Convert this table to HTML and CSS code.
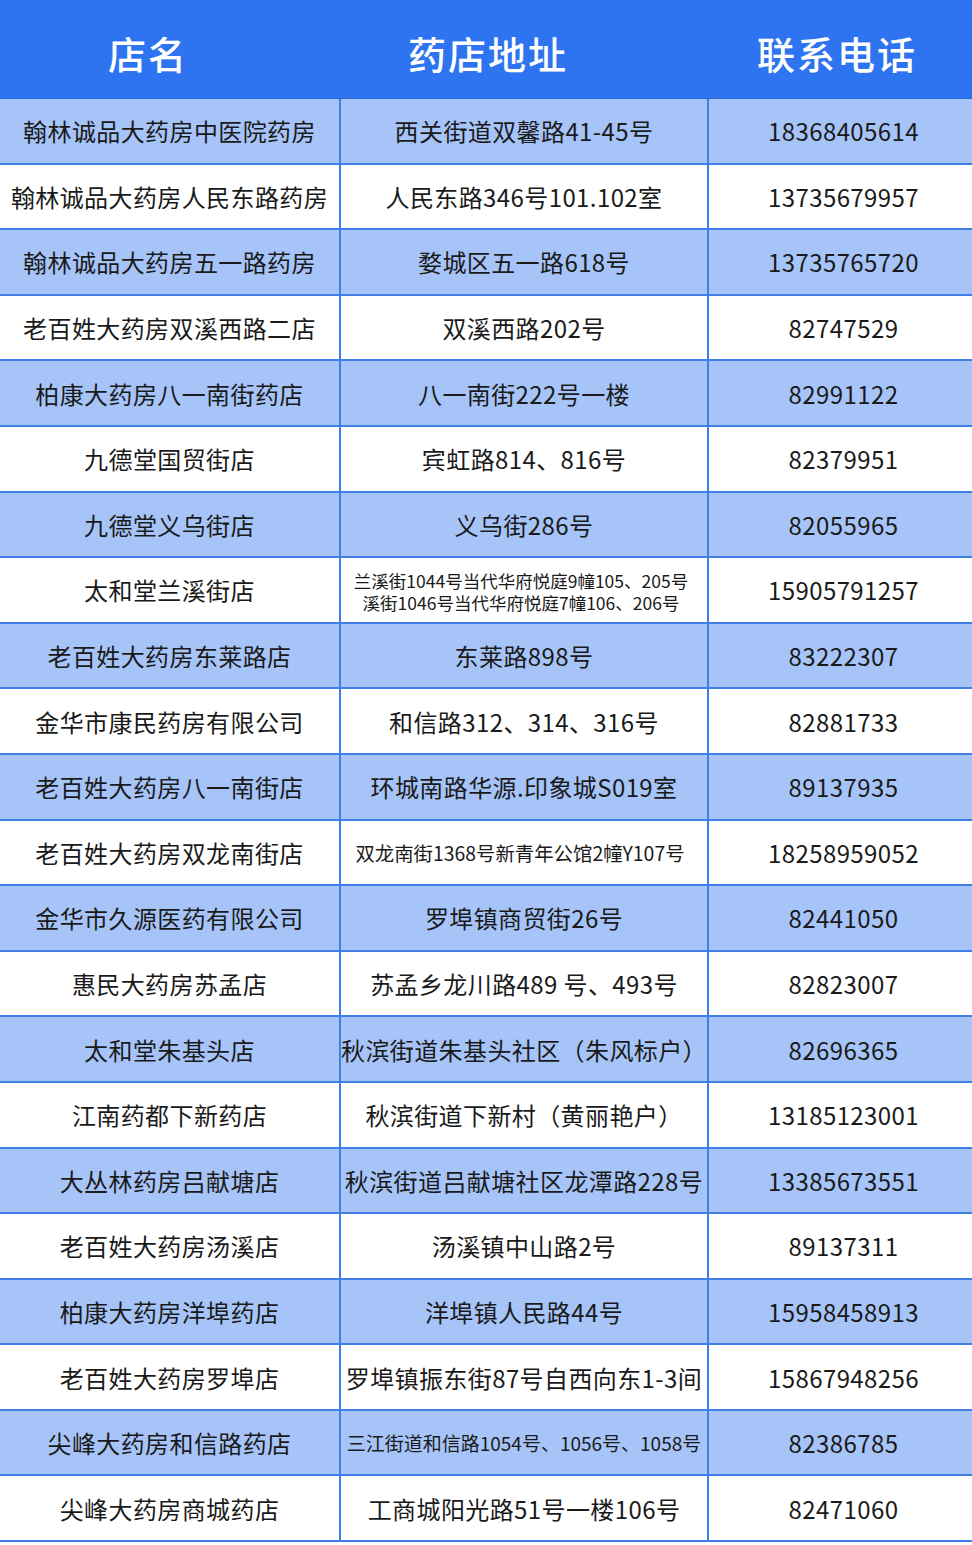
FILE: index.html
```html
<!DOCTYPE html>
<html lang="zh-CN">
<head>
<meta charset="utf-8">
<title>药店列表</title>
<link rel="stylesheet" href="styles.css">
</head>
<body>
<div class="table">
  <div class="row head">
    <div class="cell">店名</div>
    <div class="cell">药店地址</div>
    <div class="cell">联系电话</div>
  </div>
  <div class="row blue"><div class="cell">翰林诚品大药房中医院药房</div><div class="cell">西关街道双馨路41-45号</div><div class="cell num">18368405614</div></div>
  <div class="row"><div class="cell">翰林诚品大药房人民东路药房</div><div class="cell">人民东路346号101.102室</div><div class="cell num">13735679957</div></div>
  <div class="row blue"><div class="cell">翰林诚品大药房五一路药房</div><div class="cell">婺城区五一路618号</div><div class="cell num">13735765720</div></div>
  <div class="row"><div class="cell">老百姓大药房双溪西路二店</div><div class="cell">双溪西路202号</div><div class="cell num">82747529</div></div>
  <div class="row blue"><div class="cell">柏康大药房八一南街药店</div><div class="cell">八一南街222号一楼</div><div class="cell num">82991122</div></div>
  <div class="row"><div class="cell">九德堂国贸街店</div><div class="cell">宾虹路814、816号</div><div class="cell num">82379951</div></div>
  <div class="row blue"><div class="cell">九德堂义乌街店</div><div class="cell">义乌街286号</div><div class="cell num">82055965</div></div>
  <div class="row"><div class="cell">太和堂兰溪街店</div><div class="cell two">兰溪街1044号当代华府悦庭9幢105、205号<br>溪街1046号当代华府悦庭7幢106、206号</div><div class="cell num">15905791257</div></div>
  <div class="row blue"><div class="cell">老百姓大药房东莱路店</div><div class="cell">东莱路898号</div><div class="cell num">83222307</div></div>
  <div class="row"><div class="cell">金华市康民药房有限公司</div><div class="cell">和信路312、314、316号</div><div class="cell num">82881733</div></div>
  <div class="row blue"><div class="cell">老百姓大药房八一南街店</div><div class="cell">环城南路华源.印象城S019室</div><div class="cell num">89137935</div></div>
  <div class="row"><div class="cell">老百姓大药房双龙南街店</div><div class="cell small wide">双龙南街1368号新青年公馆2幢Y107号</div><div class="cell num">18258959052</div></div>
  <div class="row blue"><div class="cell">金华市久源医药有限公司</div><div class="cell">罗埠镇商贸街26号</div><div class="cell num">82441050</div></div>
  <div class="row"><div class="cell">惠民大药房苏孟店</div><div class="cell">苏孟乡龙川路489 号、493号</div><div class="cell num">82823007</div></div>
  <div class="row blue"><div class="cell">太和堂朱基头店</div><div class="cell">秋滨街道朱基头社区（朱风标户）</div><div class="cell num">82696365</div></div>
  <div class="row"><div class="cell">江南药都下新药店</div><div class="cell">秋滨街道下新村（黄丽艳户）</div><div class="cell num">13185123001</div></div>
  <div class="row blue"><div class="cell">大丛林药房吕献塘店</div><div class="cell">秋滨街道吕献塘社区龙潭路228号</div><div class="cell num">13385673551</div></div>
  <div class="row"><div class="cell">老百姓大药房汤溪店</div><div class="cell">汤溪镇中山路2号</div><div class="cell num">89137311</div></div>
  <div class="row blue"><div class="cell">柏康大药房洋埠药店</div><div class="cell">洋埠镇人民路44号</div><div class="cell num">15958458913</div></div>
  <div class="row"><div class="cell">老百姓大药房罗埠店</div><div class="cell">罗埠镇振东街87号自西向东1-3间</div><div class="cell num">15867948256</div></div>
  <div class="row blue"><div class="cell">尖峰大药房和信路药店</div><div class="cell small">三江街道和信路1054号、1056号、1058号</div><div class="cell num">82386785</div></div>
  <div class="row"><div class="cell">尖峰大药房商城药店</div><div class="cell">工商城阳光路51号一楼106号</div><div class="cell num">82471060</div></div>
</div>
</body>
</html>
```

FILE: styles.css
```css
html, body {
  margin: 0;
  padding: 0;
  background: #ffffff;
}

body {
  font-family: "Noto Sans CJK SC", "Noto Sans", sans-serif;
  color: #1a1a1a;
}

.table {
  width: 972px;
  display: flex;
  flex-direction: column;
}

.row {
  display: grid;
  grid-template-columns: 339px 368px 1fr;
  height: 65.6px;
  box-sizing: border-box;
  border-bottom: 2px solid #3f7fe6;
  background: #ffffff;
}

.row.blue {
  background: #a6c4f8;
}

.row.head {
  grid-template-columns: 296px 384px 1fr;
  height: 99px;
  background: #2e74f1;
  border-bottom: 1px solid #2a68d6;
}

.cell {
  display: flex;
  align-items: center;
  justify-content: center;
  text-align: center;
  font-size: 24px;
  letter-spacing: 0.4px;
  white-space: nowrap;
  box-sizing: border-box;
}

.row .cell + .cell {
  border-left: 2px solid #3f7fe6;
}

.row.head .cell {
  border-left: none;
  color: #ffffff;
  font-size: 38px;
  font-weight: 500;
  letter-spacing: 2px;
  padding-top: 6px;
}

.row.head .cell:last-child {
  padding-left: 22px;
}

.cell.num {
  padding-left: 6px;
}

.cell.small {
  font-size: 19px;
  letter-spacing: 0;
}

.cell.small.wide {
  font-size: 19.4px;
  padding-right: 8px;
}

.cell.two {
  font-size: 17.5px;
  line-height: 22px;
  letter-spacing: 0;
  padding-top: 5px;
  padding-right: 6px;
}
```
